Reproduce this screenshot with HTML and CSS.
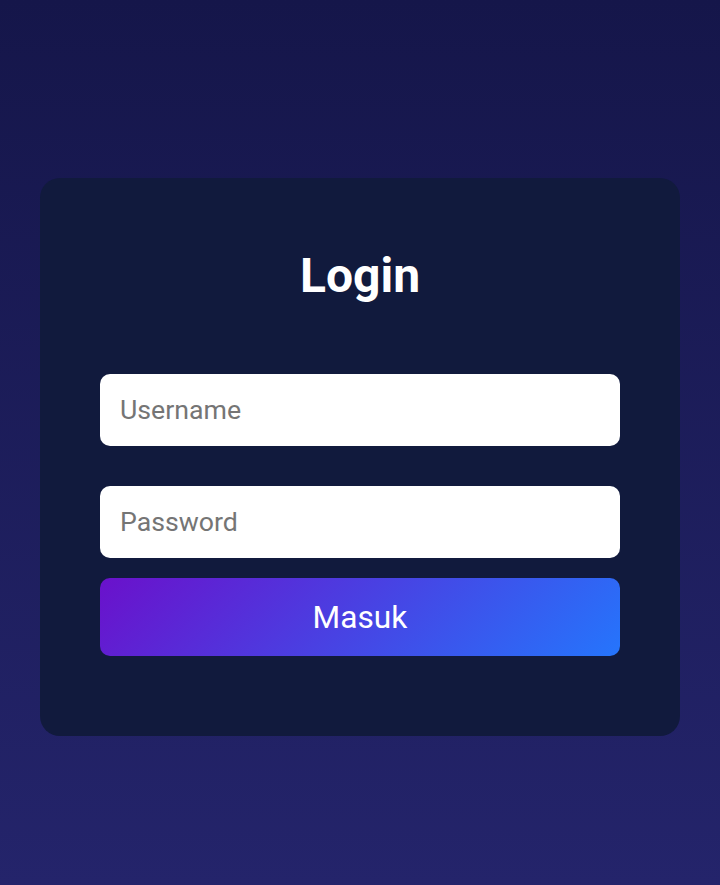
FILE: index.html
```html
<!DOCTYPE html>
<html lang="id">
<head>
<meta charset="utf-8">
<title>Login</title>
<link rel="stylesheet" href="styles.css">
</head>
<body>
<main class="page">
  <section class="card">
    <h1 class="title">Login</h1>
    <form class="form">
      <input class="field" type="text" placeholder="Username">
      <input class="field field-pass" type="password" placeholder="Password">
      <button class="btn" type="button">Masuk</button>
    </form>
  </section>
</main>
</body>
</html>
```

FILE: styles.css
```css
* { box-sizing: border-box; }
html, body { margin: 0; height: 100%; }
body {
  background: linear-gradient(180deg, #15164a 0%, #24246b 100%);
  font-family: Roboto, "Noto Sans", sans-serif;
}
.page {
  padding: 178px 40px 0;
}
.card {
  background: #111a3d;
  border-radius: 20px;
  padding: 70px 60px 80px;
}
.title {
  margin: 0;
  text-align: center;
  color: #ffffff;
  font-size: 48px;
  font-weight: 700;
  line-height: 56px;
}
.form {
  display: flex;
  flex-direction: column;
  margin-top: 70px;
}
.field {
  height: 72px;
  border: none;
  border-radius: 10px;
  background: #ffffff;
  padding: 0 20px;
  font-family: Roboto, sans-serif;
  font-size: 26.7px;
  color: #333;
  outline: none;
}
.field::placeholder { color: #757575; }
.field-pass { margin-top: 40px; }
.btn {
  margin-top: 20px;
  height: 78px;
  border: none;
  border-radius: 10px;
  background: linear-gradient(135deg, #6a11cb 0%, #2575fc 100%);
  color: #ffffff;
  font-family: Roboto, sans-serif;
  font-size: 31.7px;
}
```
